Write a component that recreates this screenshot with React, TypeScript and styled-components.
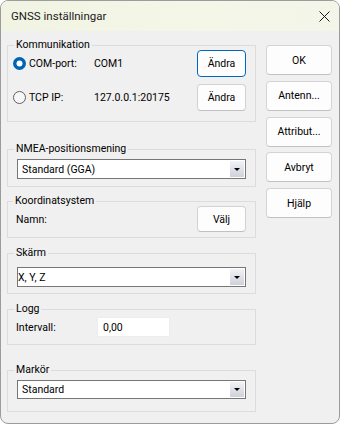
import React from "react";
import styled, { createGlobalStyle } from "styled-components";

const FONT = `"Segoe UI", Roboto, "Liberation Sans", sans-serif`;

const Global = createGlobalStyle`
  html, body { margin: 0; padding: 0; background: #ffffff; }
  body { font-family: ${FONT}; color: #000; }
  * { box-sizing: border-box; }
`;

const Window = styled.div`
  width: 340px;
  height: 424px;
  border: 1px solid #9c9c9c;
  border-radius: 8px;
  overflow: hidden;
  background: #f0f0f0;
  display: flex;
  flex-direction: column;
`;

const TitleBar = styled.div`
  height: 30px;
  flex: none;
  display: flex;
  align-items: center;
  justify-content: space-between;
  padding: 0 9px 0 10px;
  background: linear-gradient(to right, #f1f4e2, #f4f6e8 60%, #f3f5e9);
`;

const Title = styled.div`
  font-size: 11.5px;
  color: #1a1a1a;
`;

const CloseIcon = styled.svg`
  width: 11px;
  height: 11px;
  display: block;
`;

const Body = styled.div`
  display: flex;
  align-items: flex-start;
  gap: 10px;
  padding: 14px 0 0 6px;
`;

const LeftColumn = styled.div`
  width: 249px;
  display: flex;
  flex-direction: column;
`;

const GroupBox = styled.div<{ $mt: number; $pb: number }>`
  margin-top: ${(p) => p.$mt}px;
  border: 1px solid #dcdcdc;
  padding: 0 8px ${(p) => p.$pb}px 8px;
  display: flex;
  flex-direction: column;
`;

const Caption = styled.div<{ $ml?: number }>`
  align-self: flex-start;
  height: 10px;
  line-height: 10px;
  margin: -6px 0 0 ${(p) => p.$ml ?? -2}px;
  padding: 0 2px;
  background: #f0f0f0;
  font-size: 10.5px;
  color: #000;
  white-space: nowrap;
`;

const RadioRow = styled.div<{ $mt: number }>`
  display: flex;
  align-items: center;
  margin: ${(p) => p.$mt}px 0 0 -3px;
  font-size: 10.5px;
`;

const RadioLabel = styled.label`
  width: 81px;
  display: flex;
  align-items: center;
  gap: 3px;
`;

const Value = styled.div`
  flex: 1;
`;

const PushButton = styled.button<{ $focused?: boolean; $h: number }>`
  width: 49px;
  height: ${(p) => p.$h}px;
  margin-right: 1px;
  font-family: ${FONT};
  font-size: 10.5px;
  color: #000;
  background: #fdfdfd;
  border: 1px solid ${(p) => (p.$focused ? "#0067c0" : "#d2d2d2")};
  border-bottom-color: ${(p) => (p.$focused ? "#0067c0" : "#c0c0c0")};
  border-radius: 4px;
  padding: 0;
`;

const FieldRow = styled.div<{ $mt: number }>`
  display: flex;
  align-items: center;
  justify-content: space-between;
  margin-top: ${(p) => p.$mt}px;
  font-size: 10.5px;
`;

const Combo = styled.div<{ $mt: number; $h: number }>`
  margin: ${(p) => p.$mt}px 1px 0 1px;
  height: ${(p) => p.$h}px;
  display: flex;
  border: 1px solid #767676;
  background: #fff;
`;

const ComboText = styled.div<{ $pl: number }>`
  flex: 1;
  display: flex;
  align-items: center;
  padding-left: ${(p) => p.$pl}px;
  font-size: 10.5px;
`;

const ComboArrow = styled.div`
  width: 14px;
  margin: 1px;
  background: linear-gradient(#f2f3f7, #cfd1da);
  display: flex;
  align-items: center;
  justify-content: center;
  &::after {
    content: "";
    border-left: 3px solid transparent;
    border-right: 3px solid transparent;
    border-top: 3px solid #000;
  }
`;

const FieldLabel = styled.div`
  width: 81px;
`;

const TextInput = styled.div`
  width: 73px;
  height: 20px;
  display: flex;
  align-items: center;
  padding-left: 5px;
  background: #fff;
  border: 1px solid #ededed;
  font-size: 10.5px;
`;

const InputRow = styled.div`
  display: flex;
  align-items: center;
  margin-top: 3px;
  font-size: 10.5px;
`;

const RightColumn = styled.div`
  width: 66px;
  display: flex;
  flex-direction: column;
  gap: 5.75px;
`;

const DialogButton = styled.button`
  height: 30px;
  width: 66px;
  font-family: ${FONT};
  font-size: 10.5px;
  color: #000;
  background: #fdfdfd;
  border: 1px solid #d4d4d4;
  border-bottom-color: #c2c2c2;
  border-radius: 4px;
  padding: 0;
`;

const Radio = ({ checked }: { checked?: boolean }) => (
  <svg width="13" height="13" viewBox="0 0 13 13">
    {checked ? (
      <>
        <circle cx="6.5" cy="6.5" r="6.5" fill="#0063b6" />
        <circle cx="6.5" cy="6.5" r="3" fill="#ffffff" />
      </>
    ) : (
      <circle cx="6.5" cy="6.5" r="6" fill="#f7f7f7" stroke="#5f5f5f" strokeWidth="1" />
    )}
  </svg>
);

export default function App() {
  return (
    <>
      <Global />
      <Window>
        <TitleBar>
          <Title>GNSS inställningar</Title>
          <CloseIcon viewBox="0 0 11 11">
            <path d="M0.5 0.5 L10.5 10.5 M10.5 0.5 L0.5 10.5" stroke="#1a1a1a" strokeWidth="1" fill="none" />
          </CloseIcon>
        </TitleBar>
        <Body>
          <LeftColumn>
            <GroupBox $mt={0} $pb={10}>
              <Caption>Kommunikation</Caption>
              <RadioRow $mt={0}>
                <RadioLabel>
                  <Radio checked />
                  COM-port:
                </RadioLabel>
                <Value>COM1</Value>
                <PushButton $focused $h={27}>Ändra</PushButton>
              </RadioRow>
              <RadioRow $mt={7}>
                <RadioLabel>
                  <Radio />
                  TCP IP:
                </RadioLabel>
                <Value>127.0.0.1:20175</Value>
                <PushButton $h={27}>Ändra</PushButton>
              </RadioRow>
            </GroupBox>

            <GroupBox $mt={27} $pb={7}>
              <Caption>NMEA-positionsmening</Caption>
              <Combo $mt={5} $h={20}>
                <ComboText $pl={4}>Standard (GGA)</ComboText>
                <ComboArrow />
              </Combo>
            </GroupBox>

            <GroupBox $mt={14} $pb={5}>
              <Caption $ml={-3}>Koordinatsystem</Caption>
              <FieldRow $mt={0}>
                <FieldLabel>Namn:</FieldLabel>
                <PushButton $h={26}>Välj</PushButton>
              </FieldRow>
            </GroupBox>

            <GroupBox $mt={15} $pb={6}>
              <Caption>Skärm</Caption>
              <Combo $mt={9} $h={20}>
                <ComboText $pl={0}>X, Y, Z</ComboText>
                <ComboArrow />
              </Combo>
            </GroupBox>

            <GroupBox $mt={15} $pb={7}>
              <Caption>Logg</Caption>
              <InputRow>
                <FieldLabel>Intervall:</FieldLabel>
                <TextInput>0,00</TextInput>
              </InputRow>
            </GroupBox>

            <GroupBox $mt={25} $pb={12}>
              <Caption>Markör</Caption>
              <Combo $mt={5} $h={19}>
                <ComboText $pl={4}>Standard</ComboText>
                <ComboArrow />
              </Combo>
            </GroupBox>
          </LeftColumn>

          <RightColumn>
            <DialogButton>OK</DialogButton>
            <DialogButton>Antenn...</DialogButton>
            <DialogButton>Attribut...</DialogButton>
            <DialogButton>Avbryt</DialogButton>
            <DialogButton>Hjälp</DialogButton>
          </RightColumn>
        </Body>
      </Window>
    </>
  );
}
